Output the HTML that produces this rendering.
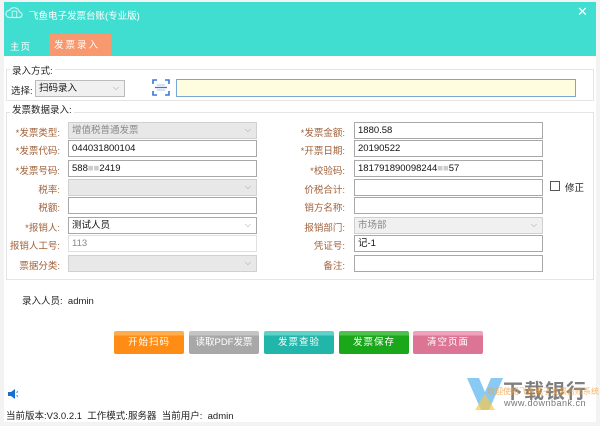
<!DOCTYPE html>
<html><head><meta charset="utf-8"><style>
*{box-sizing:border-box;margin:0;padding:0}
body{width:600px;height:426px;background:#f3f3f3;position:relative;overflow:hidden;font-family:"Liberation Sans","Noto Sans CJK SC",sans-serif;font-size:9.5px;color:#222}
.a{position:absolute}
#win{position:absolute;left:4px;top:2px;width:592px;height:420px;background:#fff}
.hdr{left:4px;top:2px;width:592px;height:54px;background:#40ded0}
.fs{border:1px solid #e4e4e4}
.lbl{position:absolute;color:#a0613a;text-align:right;width:60px;font-size:9.5px}
.in{position:absolute;height:17px;border:1px solid #a8a8a8;background:#fff;font-size:9.5px;line-height:15px;padding-left:3px;color:#111}
.dis{background:#e8e8e8;border-color:#d0d0d0;color:#888}
.sel::after{content:"⌵";position:absolute;right:5px;top:-1px;color:#999;font-size:8px}
.btn{position:absolute;top:331px;width:70px;height:23px;color:#fff;font-size:9.5px;text-align:center;line-height:23px;border-radius:2px;letter-spacing:1px}
</style></head><body>
<div id="win"></div>
<div class="a hdr"></div>
<svg class="a" style="left:5px;top:4px" width="18" height="18" viewBox="0 0 20 20"><path d="M5 15a4 4 0 0 1 0-8 6 6 0 0 1 11 2 3 3 0 0 1 0 6z" fill="none" stroke="#fff" stroke-width="1.3" opacity=".7"/><rect x="8" y="8" width="5" height="7" fill="none" stroke="#fff" stroke-width="1.1" opacity=".7"/></svg>
<div class="a" style="left:29px;top:8px;color:#fff;font-size:9.5px">飞鱼电子发票台账(专业版)</div>
<div class="a" style="left:577px;top:4px;color:#fff;font-size:13px">✕</div>
<div class="a" style="left:10px;top:39px;color:#fff;font-size:9.5px;letter-spacing:1px">主页</div>
<div class="a" style="left:49px;top:34px;width:62px;height:22px;background:#f7986e;color:#fff;font-size:9.5px;line-height:24px;padding-left:5px;letter-spacing:2px">发票录入</div>

<div class="a fs" style="left:6px;top:69px;width:588px;height:32px"></div>
<div class="a" style="left:10px;top:63px;background:#fff;padding:0 2px">录入方式:</div>
<div class="a" style="left:11px;top:83px">选择:</div>
<div class="in sel" style="left:35px;top:80px;width:90px;background:#f0f0f0;border-color:#bbb">扫码录入</div>
<svg class="a" style="left:152px;top:79px" width="18" height="17" viewBox="0 0 18 17"><path d="M1 5V1h4M13 1h4v4M17 12v4h-4M5 16H1v-4" fill="none" stroke="#3a78d6" stroke-width="1.6"/><path d="M3 8.5h12" stroke="#3a78d6" stroke-width="1.3"/><path d="M5 6h8M5 11h8" stroke="#a8c4ee" stroke-width="1"/></svg>
<div class="in" style="left:176px;top:79px;width:400px;height:18px;background:#fffde0;border-color:#7aa6d6"></div>

<div class="a fs" style="left:6px;top:112px;width:588px;height:168px"></div>
<div class="a" style="left:10px;top:102px;background:#fff;padding:0 2px">发票数据录入:</div>

<div class="lbl" style="left:0;top:125px">*发票类型:</div><div class="in dis sel" style="left:68px;top:122px;width:189px">增值税普通发票</div>
<div class="lbl" style="left:0;top:143px">*发票代码:</div><div class="in" style="left:68px;top:140px;width:189px">044031800104</div>
<div class="lbl" style="left:0;top:163px">*发票号码:</div><div class="in" style="left:68px;top:160px;width:189px">588<span style="color:#ccc">■■</span>2419</div>
<div class="lbl" style="left:0;top:182px">税率:</div><div class="in dis sel" style="left:68px;top:179px;width:189px"></div>
<div class="lbl" style="left:0;top:200px">税额:</div><div class="in" style="left:68px;top:197px;width:189px"></div>
<div class="lbl" style="left:0;top:220px">*报销人:</div><div class="in sel" style="left:68px;top:217px;width:189px">测试人员</div>
<div class="lbl" style="left:0;top:238px">报销人工号:</div><div class="in dis" style="left:68px;top:235px;width:189px;background:#fff;border-color:#e0e0e0">113</div>
<div class="lbl" style="left:0;top:258px">票据分类:</div><div class="in dis sel" style="left:68px;top:255px;width:189px"></div>

<div class="lbl" style="left:285px;top:125px">*发票金额:</div><div class="in" style="left:354px;top:122px;width:189px">1880.58</div>
<div class="lbl" style="left:285px;top:143px">*开票日期:</div><div class="in" style="left:354px;top:140px;width:189px">20190522</div>
<div class="lbl" style="left:285px;top:163px">*校验码:</div><div class="in" style="left:354px;top:160px;width:189px">181791890098244<span style="color:#ccc">■■</span>57</div>
<div class="lbl" style="left:285px;top:182px">价税合计:</div><div class="in" style="left:354px;top:179px;width:189px"></div>
<div class="lbl" style="left:285px;top:200px">销方名称:</div><div class="in" style="left:354px;top:197px;width:189px"></div>
<div class="lbl" style="left:285px;top:220px">报销部门:</div><div class="in dis sel" style="left:354px;top:217px;width:189px;background:#f0f0f0">市场部</div>
<div class="lbl" style="left:285px;top:238px">凭证号:</div><div class="in" style="left:354px;top:235px;width:189px">记-1</div>
<div class="lbl" style="left:285px;top:258px">备注:</div><div class="in" style="left:354px;top:255px;width:189px"></div>
<div class="a" style="left:550px;top:181px;width:10px;height:10px;border:1px solid #555"></div>
<div class="a" style="left:565px;top:180px">修正</div>

<div class="a" style="left:22px;top:293px">录入人员:&nbsp;&nbsp;admin</div>

<div class="btn" style="left:114px;background:linear-gradient(#ffad4a 0 20%,#ff8c14 20%)">开始扫码</div>
<div class="btn" style="left:189px;background:linear-gradient(#c4c4c4 0 20%,#a8a8a8 20%);letter-spacing:0">读取PDF发票</div>
<div class="btn" style="left:264px;background:linear-gradient(#5dd2c8 0 20%,#22b5aa 20%)">发票查验</div>
<div class="btn" style="left:339px;background:linear-gradient(#4cc24c 0 20%,#1aa81a 20%)">发票保存</div>
<div class="btn" style="left:413px;background:linear-gradient(#f0a0b8 0 20%,#dc7494 20%)">清空页面</div>

<svg class="a" style="left:7px;top:388px" width="12" height="12" viewBox="0 0 12 12"><path d="M1 4h3l4-3v10l-4-3H1z" fill="#1a6ed0"/><path d="M9.5 4.5l1.5-1M9.5 7.5l1.5 1" stroke="#1a6ed0"/></svg>
<div class="a" style="left:6px;top:408px">当前版本:V3.0.2.1&nbsp; 工作模式:服务器&nbsp; 当前用户:&nbsp; admin</div>

<svg class="a" style="left:467px;top:376px" width="36" height="36" viewBox="0 0 36 36"><path d="M0 2h12l6 14 6-14h12L22 34h-8z" fill="#55b4ee" opacity=".7"/><path d="M8 34l10-16 10 16z" fill="#f8c94c" opacity=".7"/></svg>
<div class="a" style="left:503px;top:375px;font-size:20px;color:#555;font-weight:bold;letter-spacing:1px;opacity:.75">下载银行</div>
<div class="a" style="left:487px;top:386px;font-size:8px;color:#f0a040;opacity:.8">欢迎使用飞鱼电子发票台账系统</div>
<div class="a" style="left:504px;top:398px;font-size:9px;color:#777;letter-spacing:.5px">www.downbank.cn</div>
</body></html>
